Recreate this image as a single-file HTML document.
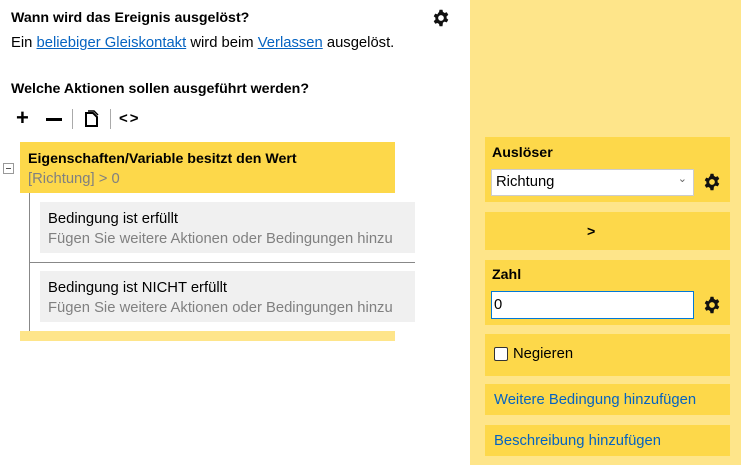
<!DOCTYPE html>
<html><head><meta charset="utf-8"><style>
*{margin:0;padding:0;box-sizing:border-box}
body{width:741px;height:465px;background:#fff;font-family:"Segoe UI","Liberation Sans",sans-serif;font-size:14.8px;color:#000;position:relative;overflow:hidden}
.a{position:absolute;white-space:nowrap}
.b{font-weight:bold;font-size:14.2px}
a{color:#0563c1;text-decoration:underline}
.gray{color:#808080}
.gbox{background:#f0f0f0;position:absolute;left:40px;width:375px;height:51px;padding:7px 8px;line-height:20px}
.rp{position:absolute;left:470px;top:0;width:271px;height:465px;background:#fee58a}
.bx{position:absolute;left:485px;width:245px;background:#fdd84a}
.gear{position:absolute;width:18px;height:18px}
</style></head><body>
<svg width="0" height="0" style="position:absolute"><defs><symbol id="g" viewBox="0 0 24 24"><path fill="#111" d="M10 1h4l.6 3a8 8 0 0 1 2.2 1.3l2.9-1 2 3.5-2.3 2a8 8 0 0 1 0 2.5l2.3 2-2 3.5-2.9-1a8 8 0 0 1-2.2 1.3L14 23h-4l-.6-3a8 8 0 0 1-2.2-1.3l-2.9 1-2-3.5 2.3-2a8 8 0 0 1 0-2.5l-2.3-2 2-3.5 2.9 1A8 8 0 0 1 9.4 4zM12 8.2a3.8 3.8 0 1 0 0 7.6 3.8 3.8 0 0 0 0-7.6z"/></symbol></defs></svg>
<div class="a b" style="left:11px;top:10px">Wann wird das Ereignis ausgelöst?</div>
<svg class="gear" style="left:432px;top:9px"><use href="#g"/></svg>
<div class="a" style="left:11px;top:35px">Ein <a>beliebiger Gleiskontakt</a> wird beim <a>Verlassen</a> ausgelöst.</div>
<div class="a b" style="left:11px;top:81px">Welche Aktionen sollen ausgeführt werden?</div>
<div class="a b" style="left:16px;top:105px;font-size:22px;line-height:26px">+</div>
<div class="a" style="left:46px;top:118px;width:16px;height:2.5px;background:#000"></div>
<div class="a" style="left:72px;top:109px;width:1px;height:20px;background:#aaa"></div>
<svg class="a" style="left:85px;top:110px" width="14" height="17" viewBox="0 0 14 17"><path d="M1 3h7l4 4v9H1z" fill="none" stroke="#000" stroke-width="2"/><path d="M3 1h6l4 4" fill="none" stroke="#000" stroke-width="1.5"/></svg>
<div class="a" style="left:110px;top:109px;width:1px;height:20px;background:#aaa"></div>
<div class="a b" style="left:119px;top:110px;font-size:15px;letter-spacing:2px">&lt;&gt;</div>
<div class="a" style="left:20px;top:142px;width:375px;height:51px;background:#fdd84a;padding:7px 8px;line-height:20px"><div class="b">Eigenschaften/Variable besitzt den Wert</div><div class="gray">[Richtung] &gt; 0</div></div>
<div class="a" style="left:3px;top:163px;width:11px;height:11px;border:1px solid #999;background:#fff"><div style="position:absolute;left:2px;top:4px;width:5px;height:1px;background:#555"></div></div>
<div class="a" style="left:29px;top:193px;width:1px;height:138px;background:#888"></div>
<div class="gbox" style="top:202px"><div>Bedingung ist erfüllt</div><div class="gray">Fügen Sie weitere Aktionen oder Bedingungen hinzu</div></div>
<div class="a" style="left:30px;top:262px;width:385px;height:1px;background:#888"></div>
<div class="gbox" style="top:271px"><div>Bedingung ist NICHT erfüllt</div><div class="gray">Fügen Sie weitere Aktionen oder Bedingungen hinzu</div></div>
<div class="a" style="left:20px;top:331px;width:375px;height:10px;background:#fee58a"></div>
<div class="rp"></div>
<div class="bx" style="top:137px;height:65px"><div class="a b" style="left:7px;top:8px">Auslöser</div>
<div class="a" style="left:6px;top:32px;width:203px;height:27px;background:#fff;border:1px solid #ccc;padding:4px 4px">Richtung<span style="position:absolute;right:6px;top:2px;color:#666;font-size:11px">&#8964;</span></div></div>
<svg class="gear" style="left:703px;top:173px"><use href="#g"/></svg>
<div class="bx" style="top:212px;height:38px"><div class="a b" style="left:102px;top:12px">&gt;</div></div>
<div class="bx" style="top:260px;height:65px"><div class="a b" style="left:7px;top:7px">Zahl</div>
<div class="a" style="left:6px;top:31px;width:203px;height:28px;background:#fff;border:1px solid #0078d7;padding:5px 2px">0</div></div>
<svg class="gear" style="left:703px;top:296px"><use href="#g"/></svg>
<div class="bx" style="top:334px;height:42px"><div class="a" style="left:9px;top:13px;width:14px;height:14px;border:1px solid #333;background:#fff;border-radius:2px"></div><div class="a" style="left:28px;top:12px">Negieren</div></div>
<div class="bx" style="top:384px;height:31px"><div class="a" style="left:9px;top:8px;color:#0563c1">Weitere Bedingung hinzufügen</div></div>
<div class="bx" style="top:425px;height:31px"><div class="a" style="left:9px;top:8px;color:#0563c1">Beschreibung hinzufügen</div></div>
</body></html>
